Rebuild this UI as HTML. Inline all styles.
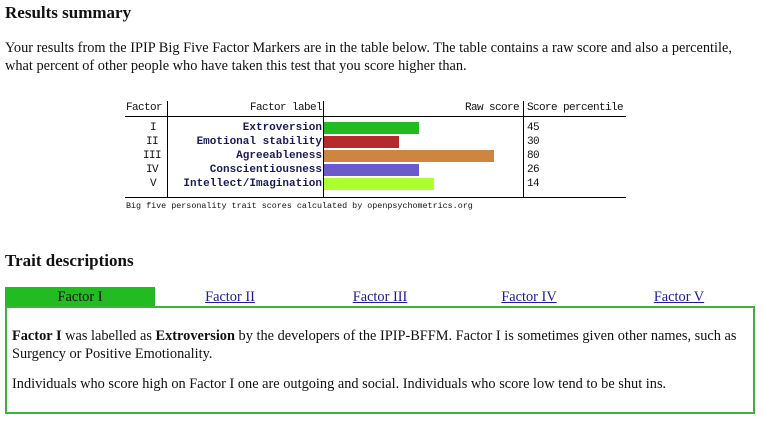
<!DOCTYPE html>
<html><head><style>
body{margin:0;width:763px;height:426px;background:#fff;font-family:"Liberation Serif",serif;color:#111;position:relative;overflow:hidden}
.a{position:absolute;white-space:nowrap}
h2{position:absolute;margin:0;font-size:17px;font-weight:bold}
.p{font-size:14.35px;line-height:18px}
.m{font-family:"Liberation Mono",monospace;font-size:11px;letter-spacing:-0.6px;line-height:14px}
.hl{position:absolute;background:#000;height:1px}
.vl{position:absolute;background:#000;width:1px}
.bar{position:absolute;height:12px;left:324px}
.lab{font-weight:bold;color:#1a1a5a;right:441px;text-align:right;font-size:11px;letter-spacing:0}
.tab{position:absolute;top:289px;font-size:14.35px;color:#1a1aa0;text-decoration:underline;text-align:center;width:150px}
</style></head><body>
<h2 style="left:5px;top:3px">Results summary</h2>
<div class="a p" style="left:5px;top:39px">Your results from the IPIP Big Five Factor Markers are in the table below. The table contains a raw score and also a percentile,<br>what percent of other people who have taken this test that you score higher than.</div>

<div class="vl" style="left:167px;top:101px;height:96px"></div>
<div class="vl" style="left:323px;top:101px;height:96px"></div>
<div class="vl" style="left:523px;top:101px;height:96px"></div>
<div class="hl" style="left:125px;top:116px;width:501px"></div>
<div class="hl" style="left:125px;top:197px;width:501px"></div>
<div class="a m" style="left:126px;top:101px">Factor</div>
<div class="a m" style="right:441px;top:101px">Factor label</div>
<div class="a m" style="right:244px;top:101px">Raw score</div>
<div class="a m" style="left:527px;top:101px">Score percentile</div>

<div class="a m" style="left:150px;top:121px">I</div>
<div class="a m" style="left:146px;top:135px">II</div>
<div class="a m" style="left:143px;top:149px">III</div>
<div class="a m" style="left:146px;top:163px">IV</div>
<div class="a m" style="left:150px;top:177px">V</div>

<div class="a m lab" style="top:121px">Extroversion</div>
<div class="a m lab" style="top:135px">Emotional stability</div>
<div class="a m lab" style="top:149px">Agreeableness</div>
<div class="a m lab" style="top:163px">Conscientiousness</div>
<div class="a m lab" style="top:177px">Intellect/Imagination</div>

<div class="bar" style="top:122px;width:95px;background:#22bb22"></div>
<div class="bar" style="top:136px;width:75px;background:#b52a2a"></div>
<div class="bar" style="top:150px;width:170px;background:#cd8540"></div>
<div class="bar" style="top:164px;width:95px;background:#6a5acd"></div>
<div class="bar" style="top:178px;width:110px;background:#adff2f"></div>

<div class="a m" style="left:527px;top:121px">45</div>
<div class="a m" style="left:527px;top:135px">30</div>
<div class="a m" style="left:527px;top:149px">80</div>
<div class="a m" style="left:527px;top:163px">26</div>
<div class="a m" style="left:527px;top:177px">14</div>
<div class="a m" style="left:126px;top:199px;font-size:8.4px;letter-spacing:0">Big five personality trait scores calculated by openpsychometrics.org</div>

<h2 style="left:5px;top:251px">Trait descriptions</h2>
<div class="a" style="left:5px;top:287px;width:150px;height:20px;background:#22bb22"></div>
<div class="tab" style="left:5px;color:#111;text-decoration:none">Factor I</div>
<div class="tab" style="left:155px">Factor II</div>
<div class="tab" style="left:305px">Factor III</div>
<div class="tab" style="left:454px">Factor IV</div>
<div class="tab" style="left:604px">Factor V</div>
<div class="a" style="left:5px;top:306px;width:746px;height:104px;border:2px solid #3cb43c"></div>
<div class="a p" style="left:12px;top:327px"><b>Factor I</b> was labelled as <b>Extroversion</b> by the developers of the IPIP-BFFM. Factor I is sometimes given other names, such as<br>Surgency or Positive Emotionality.</div>
<div class="a p" style="left:12px;top:375px">Individuals who score high on Factor I one are outgoing and social. Individuals who score low tend to be shut ins.</div>
</body></html>
